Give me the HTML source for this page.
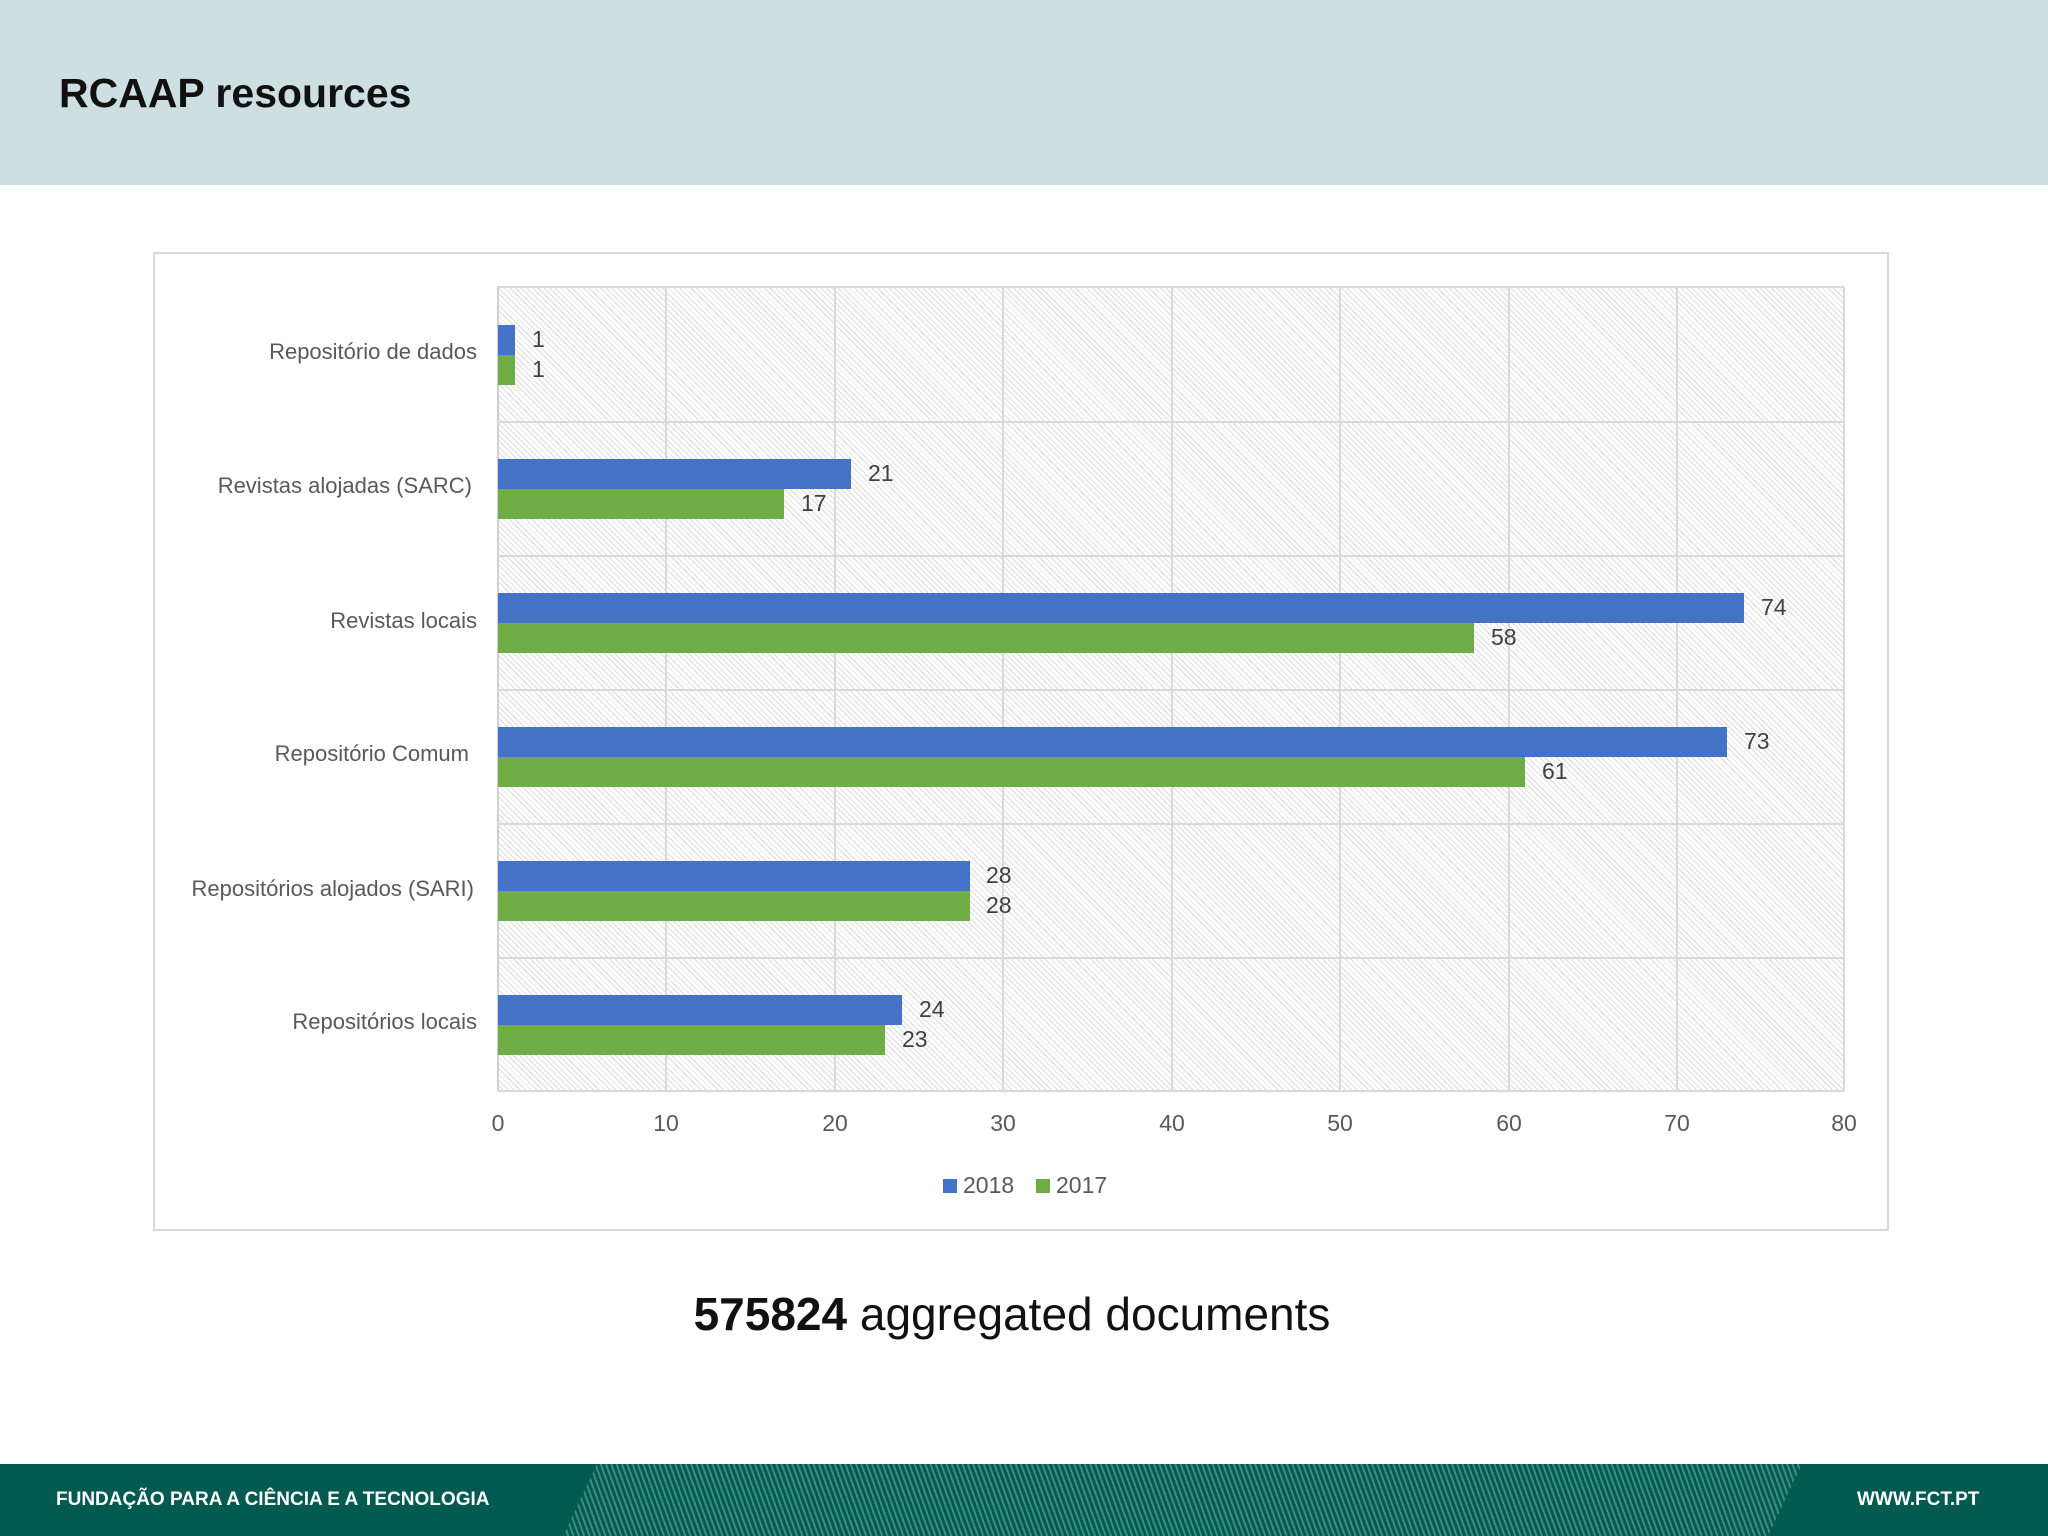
<!DOCTYPE html>
<html><head><meta charset="utf-8"><style>
*{margin:0;padding:0;box-sizing:border-box}
body{width:2048px;height:1536px;position:relative;background:#fff;font-family:"Liberation Sans",sans-serif;overflow:hidden}
.a{position:absolute}
.hdr{left:0;top:0;width:2048px;height:185px;background:#cddfe0}
.title{left:59px;top:70px;font-size:41px;font-weight:bold;color:#111}
.box{left:153px;top:252px;width:1736px;height:979px;border:2px solid #d9d9d9}
.plot{left:497px;top:287px;width:1347px;height:804px;background:repeating-linear-gradient(45deg,#fff 0 3px,#dcdcdc 3px 4px);border-left:2px solid #d0d0d0;}
.vl{width:2px;background:#d9d9d9;top:287px;height:804px}
.hl{height:2px;background:#d9d9d9;left:497px;width:1347px}
.lab{font-size:22px;color:#595959;text-align:right;width:440px;left:37px}
.b{height:30px}
.bl{background:#4472c4}.gr{background:#70ad47}
.v{font-size:23px;color:#404040}
.x{font-size:23px;color:#595959;width:60px;text-align:center;top:1110px}
.ftr{left:0;top:1464px;width:2048px;height:72px;background:#025a50}
.hatch{left:0;top:1464px;width:2048px;height:72px;background:repeating-linear-gradient(70deg,#025a50 0 3px,#3f8c82 3px 5px);clip-path:polygon(597px 0,1802px 0,1768px 72px,563px 72px)}
.ft{color:#fff;font-weight:bold;font-size:19px;top:1489px}
</style></head><body>
<div class="a hdr"></div>
<div class="a title">RCAAP resources</div>
<div class="a box"></div>
<div class="a plot"></div>
<div class="a vl" style="left:665px"></div><div class="a vl" style="left:834px"></div><div class="a vl" style="left:1002px"></div><div class="a vl" style="left:1171px"></div><div class="a vl" style="left:1339px"></div><div class="a vl" style="left:1508px"></div><div class="a vl" style="left:1676px"></div><div class="a vl" style="left:1843px"></div>
<div class="a hl" style="top:286px"></div><div class="a hl" style="top:421px"></div><div class="a hl" style="top:555px"></div><div class="a hl" style="top:689px"></div><div class="a hl" style="top:823px"></div><div class="a hl" style="top:957px"></div><div class="a hl" style="top:1090px"></div>

<div class="a lab" style="top:339px">Repositório de dados</div>
<div class="a b bl" style="left:498px;top:325px;width:17px"></div><div class="a b gr" style="left:498px;top:355px;width:17px"></div>
<div class="a v" style="left:532px;top:326px">1</div><div class="a v" style="left:532px;top:356px">1</div>

<div class="a lab" style="top:473px;width:435px">Revistas alojadas (SARC)</div>
<div class="a b bl" style="left:498px;top:459px;width:353px"></div><div class="a b gr" style="left:498px;top:489px;width:286px"></div>
<div class="a v" style="left:868px;top:460px">21</div><div class="a v" style="left:801px;top:490px">17</div>

<div class="a lab" style="top:608px">Revistas locais</div>
<div class="a b bl" style="left:498px;top:593px;width:1246px"></div><div class="a b gr" style="left:498px;top:623px;width:976px"></div>
<div class="a v" style="left:1761px;top:594px">74</div><div class="a v" style="left:1491px;top:624px">58</div>

<div class="a lab" style="top:741px;width:432px">Repositório Comum</div>
<div class="a b bl" style="left:498px;top:727px;width:1229px"></div><div class="a b gr" style="left:498px;top:757px;width:1027px"></div>
<div class="a v" style="left:1744px;top:728px">73</div><div class="a v" style="left:1542px;top:758px">61</div>

<div class="a lab" style="top:876px;width:437px">Repositórios alojados (SARI)</div>
<div class="a b bl" style="left:498px;top:861px;width:472px"></div><div class="a b gr" style="left:498px;top:891px;width:472px"></div>
<div class="a v" style="left:986px;top:862px">28</div><div class="a v" style="left:986px;top:892px">28</div>

<div class="a lab" style="top:1009px">Repositórios locais</div>
<div class="a b bl" style="left:498px;top:995px;width:404px"></div><div class="a b gr" style="left:498px;top:1025px;width:387px"></div>
<div class="a v" style="left:919px;top:996px">24</div><div class="a v" style="left:902px;top:1026px">23</div>

<div class="a x" style="left:468px">0</div><div class="a x" style="left:636px">10</div><div class="a x" style="left:805px">20</div><div class="a x" style="left:973px">30</div><div class="a x" style="left:1142px">40</div><div class="a x" style="left:1310px">50</div><div class="a x" style="left:1479px">60</div><div class="a x" style="left:1647px">70</div><div class="a x" style="left:1814px">80</div>

<div class="a bl" style="left:943px;top:1179px;width:14px;height:14px"></div><div class="a v" style="left:963px;top:1172px;color:#595959">2018</div>
<div class="a gr" style="left:1036px;top:1179px;width:14px;height:14px"></div><div class="a v" style="left:1056px;top:1172px;color:#595959">2017</div>

<div class="a" style="left:0;width:2024px;text-align:center;top:1287px;font-size:46px;color:#111"><b>575824</b> aggregated documents</div>

<div class="a ftr"></div>
<div class="a hatch"></div>
<div class="a ft" style="left:56px">FUNDAÇÃO PARA A CIÊNCIA E A TECNOLOGIA</div>
<div class="a ft" style="left:1857px">WWW.FCT.PT</div>
</body></html>
